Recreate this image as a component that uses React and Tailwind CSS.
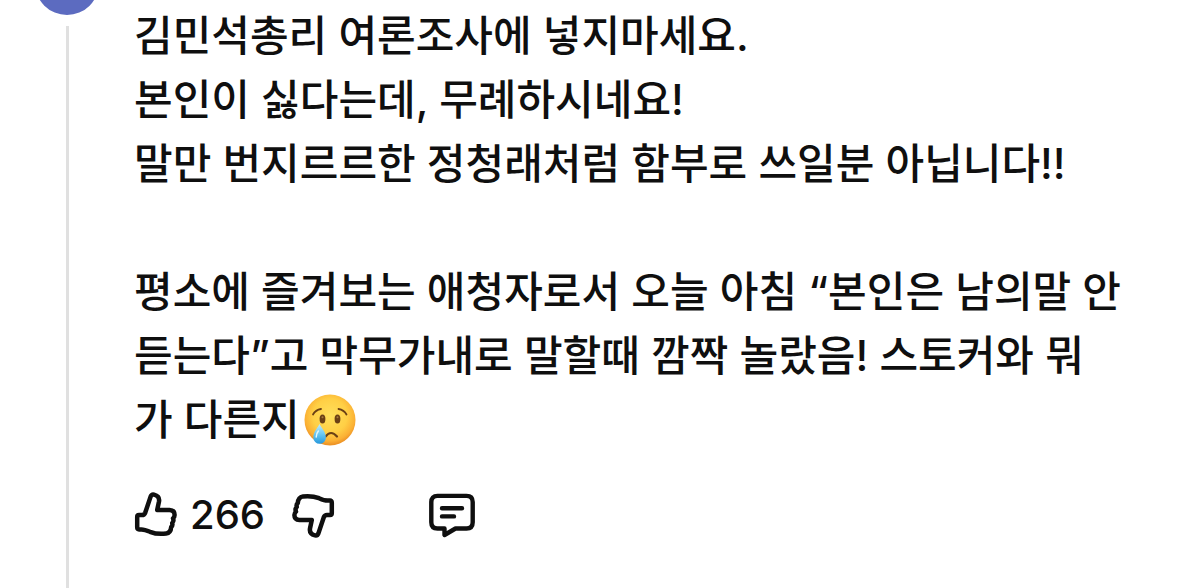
function ThumbIcon({ className }) {
  return (
    <svg
      className={className}
      viewBox="0 0 44 46"
      fill="none"
      stroke="currentColor"
      strokeWidth="4.5"
      strokeLinecap="round"
      strokeLinejoin="round"
      aria-hidden="true"
    >
      <path d="M5 23H8Q10.3 23 11.2 20.8L16.6 4.6Q17.6 2.1 20 2.6Q25.9 4.2 25 9.5L23.2 18H35.5Q40.6 18.2 40.6 23Q40.6 25 39 26.4Q40.2 29 38.2 31Q39 33.4 37.2 35Q36.8 40.8 32 41.6Q23 42.6 16 39.8Q10.5 37.4 7.5 37.4H5Q3.2 37.4 3.2 35.6V24.8Q3.2 23 5 23Z" />
    </svg>
  );
}

function CommentIcon() {
  return (
    <svg
      className="h-[46px] w-12"
      viewBox="0 0 48 46"
      fill="none"
      stroke="currentColor"
      strokeWidth="4.4"
      strokeLinecap="round"
      strokeLinejoin="round"
      aria-hidden="true"
    >
      <path d="M9.5 3.9H38.5Q44.7 3.9 44.7 10.1V30.3Q44.7 36.5 38.5 36.5H27.5L16.5 43V36.5H9.5Q3.3 36.5 3.3 30.3V10.1Q3.3 3.9 9.5 3.9Z" />
      <path d="M14 16.2H34M14 24.4H26" />
    </svg>
  );
}

function CryingFace() {
  return (
    <svg className="ml-1 inline-block size-[52px] align-[-11px]" viewBox="0 0 52 52" role="img" aria-label="우는 얼굴">
      <defs>
        <radialGradient id="face" cx="50%" cy="42%" r="56%">
          <stop offset="0" stopColor="#ffe05c" />
          <stop offset="0.6" stopColor="#ffcf45" />
          <stop offset="0.88" stopColor="#fbb034" />
          <stop offset="1" stopColor="#ee9426" />
        </radialGradient>
        <linearGradient id="tear" x1="0" y1="0" x2="0" y2="1">
          <stop offset="0" stopColor="#c4ecfb" />
          <stop offset="0.5" stopColor="#6cc9f3" />
          <stop offset="1" stopColor="#2497dc" />
        </linearGradient>
      </defs>
      <circle cx="26" cy="26" r="25.5" fill="url(#face)" />
      <g fill="none" stroke="#6b4015" strokeWidth="1.8" strokeLinecap="round">
        <path d="M9 20.5Q11.5 15.8 17 15" />
        <path d="M34.5 15Q40 15.8 42.5 20.5" />
        <path d="M21.5 42.5Q27 35.5 33 42.5" strokeWidth="2.2" />
      </g>
      <ellipse cx="18.5" cy="25" rx="2.9" ry="4.5" fill="#6b4015" />
      <ellipse cx="33.5" cy="25" rx="2.9" ry="4.5" fill="#6b4015" />
      <circle cx="18.5" cy="23.3" r="1" fill="#a77b3d" />
      <circle cx="33.5" cy="23.3" r="1" fill="#a77b3d" />
      <path d="M15.5 30C17.5 34 21.9 38 21.9 43.5A6.3 6.3 0 0 1 9.3 43.5C9.3 38 13.5 34 15.5 30Z" fill="url(#tear)" />
      <path d="M12.2 43Q12.2 39.5 14.4 37" fill="none" stroke="#e3f6fd" strokeWidth="1.5" strokeLinecap="round" />
    </svg>
  );
}

export default function App() {
  return (
    <div className="flex min-h-screen bg-white font-['Inter','Noto_Sans_CJK_KR',sans-serif] font-medium text-[#0f0f0f]">
      {/* Avatar and thread line */}
      <div className="flex w-[134px] shrink-0 flex-col items-center gap-[11px]">
        <div className="h-[15px] w-16 overflow-hidden">
          <div className="-mt-[49px] size-16 rounded-full bg-[#5c6bc0]" />
        </div>
        <div className="w-[3px] flex-1 bg-[#e0e0e0]" />
      </div>

      <article className="min-w-0 flex-1 pt-1 pr-[72px]">
        <p className="text-[42px] leading-[64px] break-all">
          김민석총리 여론조사에 넣지마세요.
          <br />
          본인이 싫다는데, 무례하시네요!
          <br />
          말만 번지르르한 정청래처럼 함부로 쓰일분 아닙니다!!
          <br />
          <br />
          평소에 즐겨보는 애청자로서 오늘 아침 “본인은 남의말 안
          <br />
          듣는다”고 막무가내로 말할때 깜짝 놀랐음! 스토커와 뭐
          <br />
          가 다른지
          <CryingFace />
        </p>

        <div className="mt-10 flex items-center">
          <button type="button" aria-label="좋아요" className="flex items-center gap-3">
            <ThumbIcon className="h-[46px] w-11" />
            <span className="text-[40px] leading-[46px]">266</span>
          </button>
          <button type="button" aria-label="싫어요" className="ml-[26px]">
            <ThumbIcon className="h-[46px] w-11 rotate-180" />
          </button>
          <button type="button" aria-label="답글" className="ml-[93px]">
            <CommentIcon />
          </button>
        </div>
      </article>
    </div>
  );
}
